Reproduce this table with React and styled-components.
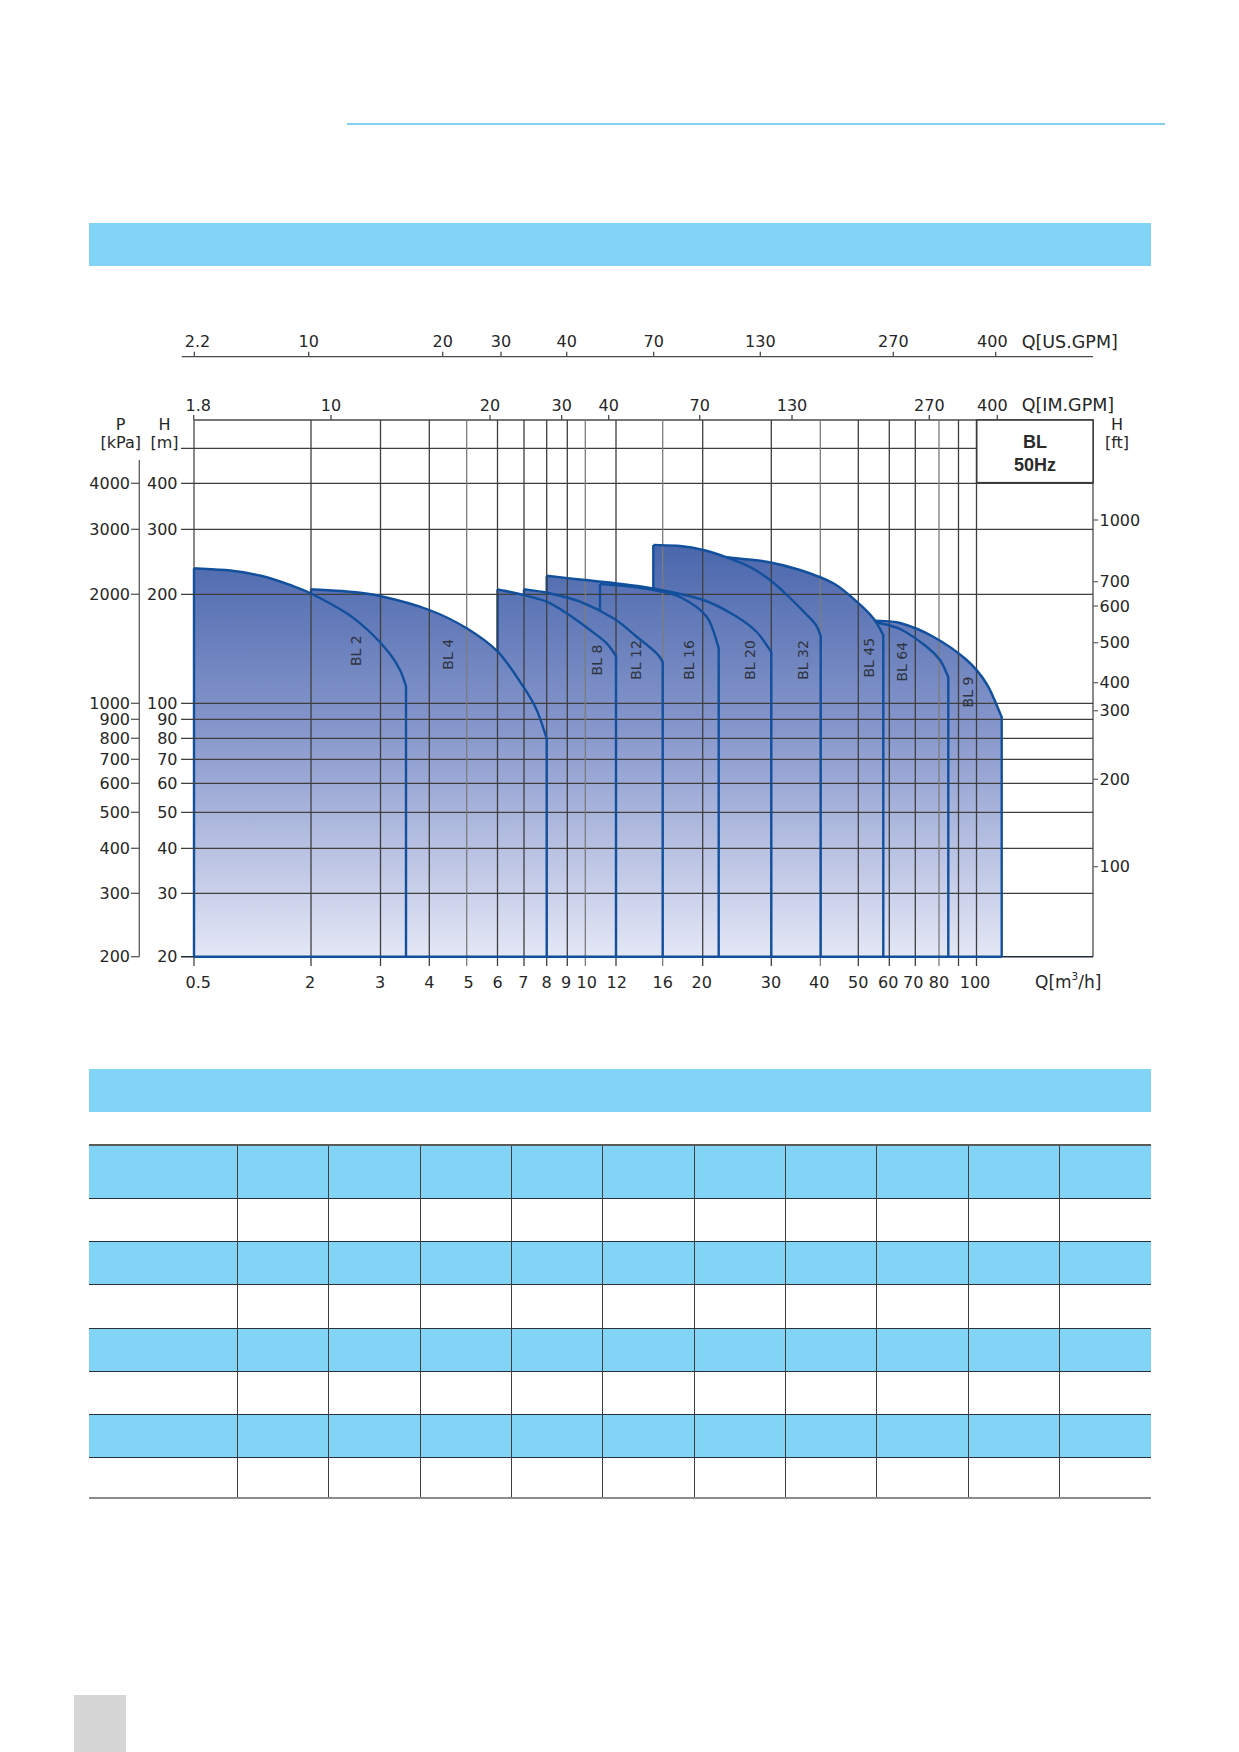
import React from 'react'
import styled, { createGlobalStyle } from 'styled-components'

const GlobalStyle = createGlobalStyle`
  html, body {
    margin: 0;
    padding: 0;
    background: #fff;
  }
  body {
    font-family: 'DejaVu Sans', 'Liberation Sans', sans-serif;
  }
`

const BAND_BLUE = '#82d4f6'
const CURVE_BLUE = '#124f9c'
const BOTTOM = 956.7
const LEFT = 194
const RIGHT = 1093
const TOP = 420

const Page = styled.div`
  width: 1239px;
  height: 1752px;
  overflow: hidden;
  background: #fff;
  display: flex;
  flex-direction: column;
`

const TopRule = styled.div`
  margin: 123px 0 0 347px;
  width: 818px;
  height: 2px;
  background: #86d1f1;
`

const SectionBand = styled.div`
  margin: ${p => p.$gap}px 0 0 89px;
  width: 1062px;
  height: 43px;
  background: ${BAND_BLUE};
`

const Chart = styled.svg`
  display: block;
  margin-top: 34px;
  flex: none;
`

const GridLine = styled.line`
  stroke: ${p => (p.$light ? '#7c7c7c' : '#3f3f3f')};
  stroke-width: 1.3;
`

const AxisLine = styled.line`
  stroke: ${p => p.$tone || '#4a4a4a'};
  stroke-width: ${p => p.$w || 1.3};
`

const AxisText = styled.text`
  font-family: 'DejaVu Sans', sans-serif;
  font-size: ${p => p.$size || 16}px;
  fill: #262626;
`

const CurveFill = styled.path`
  fill: url(#blGradient);
  stroke: none;
`

const CurveStroke = styled.path`
  fill: none;
  stroke: ${CURVE_BLUE};
  stroke-width: 2.4;
  stroke-linejoin: round;
`

const CurveLabel = styled.text`
  font-family: 'DejaVu Sans', sans-serif;
  font-size: 14px;
  fill: #2e3440;
`

const ModelBox = styled.rect`
  fill: #fff;
  stroke: #3a3a3a;
  stroke-width: 1.6;
`

const ModelText = styled.text`
  font-family: 'Liberation Sans', Arial, sans-serif;
  font-weight: 700;
  font-size: 18px;
  fill: #2b2b2b;
`

const Table = styled.table`
  margin: 32.3px 0 0 89px;
  width: 1062px;
  border-collapse: collapse;
  table-layout: fixed;
  border-top: 2px solid #5a5a5a;
  border-bottom: 2px solid #8c8c8c;
`

const Row = styled.tr`
  height: ${p => p.$h}px;
  background: ${p => (p.$blue ? BAND_BLUE : '#fff')};
`

const Cell = styled.td`
  padding: 0;
  border-top: 1.5px solid #2b2f36;
  border-left: ${p => (p.$first ? 'none' : '1.5px solid #3f3f3f')};
  ${p => p.$first && 'width: 148px;'}
`

const FooterTab = styled.div`
  margin: auto 0 0 74px;
  width: 52px;
  height: 57px;
  background: #d6d6d6;
`

// catmull-rom through the sampled points, as cubic segments
const smooth = pts => {
  let d = ''
  for (let i = 0; i < pts.length - 1; i++) {
    const p0 = pts[i - 1] || pts[i]
    const p1 = pts[i]
    const p2 = pts[i + 1]
    const p3 = pts[i + 2] || p2
    const c1 = [p1[0] + (p2[0] - p0[0]) / 6, p1[1] + (p2[1] - p0[1]) / 6]
    const c2 = [p2[0] - (p3[0] - p1[0]) / 6, p2[1] - (p3[1] - p1[1]) / 6]
    d += ` C${c1.map(n => n.toFixed(1))} ${c2.map(n => n.toFixed(1))} ${p2}`
  }
  return d
}

// drawn right to left so each curve's left edge hides under its neighbour
const curves = [
  {
    name: 'BL 9',
    label: [967.7, 692],
    pts: [[875, 620.7], [900, 623], [933.3, 636.7], [966.7, 660], [986.7, 684], [1001.7, 717]],
  },
  {
    name: 'BL 64',
    label: [902.3, 661.7],
    pts: [[876.7, 622.5], [900, 629], [926.7, 646.7], [940, 660], [948.3, 677]],
  },
  {
    name: 'BL 45',
    label: [869.3, 657.7],
    pts: [[726.7, 557.3], [766.7, 561.7], [800, 570], [833.3, 583.3], [856.7, 601.7], [873.3, 618.3], [883.3, 635]],
  },
  {
    name: 'BL 32',
    label: [803.3, 660],
    pts: [[653.3, 545], [680, 546], [703.3, 550], [726.7, 557.3], [750, 567], [770, 580], [788, 596], [805, 613], [816, 625], [820.7, 636]],
  },
  {
    name: 'BL 20',
    label: [750, 660],
    pts: [[546.7, 575.7], [580, 579.5], [613.3, 583], [653.3, 588.5], [703.3, 600], [736.7, 616.7], [756.7, 632], [771.3, 652]],
  },
  {
    name: 'BL 16',
    label: [689, 660],
    pts: [[600, 584], [630, 586.5], [653.3, 590], [680, 597], [706.7, 616.7], [718.7, 648]],
  },
  {
    name: 'BL 12',
    label: [636, 660],
    pts: [[524, 589.3], [546.7, 592.7], [580, 601.7], [613.3, 618.3], [636.7, 636.7], [656.7, 653.3], [662.7, 662]],
  },
  {
    name: 'BL 8',
    label: [596.7, 660],
    pts: [[497.5, 589.3], [523.3, 595], [546.7, 601.7], [566.7, 613.3], [590, 630], [606.7, 643.3], [616, 656]],
  },
  {
    name: 'BL 4',
    label: [447.7, 654.3],
    pts: [[311, 589.3], [346.7, 591.5], [380, 596], [429.3, 610], [466.7, 628.3], [497.7, 651.7], [523.3, 686.7], [536.7, 710], [546.7, 738.3]],
  },
  {
    name: 'BL 2',
    label: [355.7, 650.7],
    pts: [[LEFT, 568.3], [230, 570.5], [262, 576], [290, 585], [311, 593.5], [346.7, 613.3], [372, 634], [390, 654], [400, 670], [406, 686]],
  },
]

const headLines = [448.3, 483.3, 529.3, 594.3, 703.3, 719.3, 738.3, 759.3, 783.3, 812.3, 848.3, 893.3]

const flowLines = [
  { x: 311 }, { x: 380.5 }, { x: 429.3 }, { x: 466.7, light: true }, { x: 497.5 },
  { x: 524 }, { x: 546.7 }, { x: 567.3 }, { x: 585.3, light: true }, { x: 616 },
  { x: 662.7, light: true }, { x: 702.7 }, { x: 771.3 }, { x: 820.3, light: true },
  { x: 858.3 }, { x: 889.3 }, { x: 915.3 }, { x: 939, light: true }, { x: 958.5 }, { x: 976.5 },
]

const flowLabels = [
  ['0.5', 198.3], ['2', 310], ['3', 380], ['4', 429.3], ['5', 468.7], ['6', 497.7],
  ['7', 523.3], ['8', 546.7], ['9', 566], ['10', 586.7], ['12', 616.7], ['16', 662.7],
  ['20', 701.7], ['30', 771], ['40', 819.3], ['50', 858.3], ['60', 888.3], ['70', 913.3],
  ['80', 939], ['100', 975],
]

const pressureLabels = [
  ['4000', '400', 483.3], ['3000', '300', 529.3], ['2000', '200', 594.3],
  ['1000', '100', 703.3], ['900', '90', 719.3], ['800', '80', 738.3],
  ['700', '70', 759.3], ['600', '60', 783.3], ['500', '50', 812.3],
  ['400', '40', 848.3], ['300', '30', 893.3], ['200', '20', BOTTOM],
]

const feetLabels = [
  ['1000', 520], ['700', 581.7], ['600', 606], ['500', 642.7],
  ['400', 682.7], ['300', 710.7], ['200', 779.3], ['100', 866.7],
]

const usGpm = [
  ['2.2', 194.3, 197.5], ['10', 308.7], ['20', 442.7], ['30', 501], ['40', 566.7],
  ['70', 653.7], ['130', 760.3], ['270', 893.3], ['400', 995.7, 992.3],
]

const imGpm = [
  ['1.8', 193.7, 198.3], ['10', 331], ['20', 490], ['30', 561.7], ['40', 608.7],
  ['70', 699.7], ['130', 792], ['270', 929.3], ['400', 997.3, 992.3],
]

const TopScale = ({ ticks, y, title }) => (
  <g>
    {ticks.map(([text, tx, lx]) => (
      <g key={text}>
        <AxisLine x1={tx} x2={tx} y1={y - 5} y2={y} />
        <AxisText x={lx || tx} y={y - 15} textAnchor="middle" dominantBaseline="central">
          {text}
        </AxisText>
      </g>
    ))}
    <AxisText x={1021.7} y={y - 15} dominantBaseline="central" $size={17.5}>
      {title}
    </AxisText>
  </g>
)

const UnitStack = ({ x, top, bottom }) => (
  <g>
    <AxisText x={x} y={424} textAnchor="middle" dominantBaseline="central">{top}</AxisText>
    <AxisText x={x} y={442} textAnchor="middle" dominantBaseline="central">{bottom}</AxisText>
  </g>
)

const PerformanceChart = () => (
  <Chart width="1239" height="710" viewBox="0 300 1239 710">
    <defs>
      <linearGradient id="blGradient" gradientUnits="userSpaceOnUse" x1="0" y1="545" x2="0" y2={BOTTOM}>
        <stop offset="0" stopColor="#4a67ac" />
        <stop offset="0.45" stopColor="#8797cc" />
        <stop offset="1" stopColor="#e4e7f6" />
      </linearGradient>
    </defs>

    {/* US gallon scale */}
    <AxisLine x1={181.7} x2={RIGHT} y1={356.7} y2={356.7} />
    <TopScale ticks={usGpm} y={356.7} title="Q[US.GPM]" />

    {/* imperial gallon scale sits on the chart's top border */}
    <TopScale ticks={imGpm} y={TOP} title="Q[IM.GPM]" />

    {/* frame under the fills */}
    <AxisLine x1={LEFT} x2={LEFT} y1={TOP} y2={966} />
    <AxisLine x1={RIGHT} x2={RIGHT} y1={TOP} y2={BOTTOM} />
    <AxisLine x1={LEFT} x2={RIGHT} y1={TOP} y2={TOP} />

    {curves.map(({ name, pts }) => {
      const [x0, y0] = pts[0]
      const [x1] = pts[pts.length - 1]
      return (
        <g key={name}>
          <CurveFill d={`M${x0},${BOTTOM} L${x0},${y0}${smooth(pts)} L${x1},${BOTTOM} Z`} />
          <CurveStroke d={`M${x0},${BOTTOM} L${x0},${y0}`} />
        </g>
      )
    })}

    {headLines.map(y => (
      <GridLine key={y} x1={181} x2={RIGHT} y1={y} y2={y} />
    ))}
    {flowLines.map(({ x, light }) => (
      <GridLine key={x} x1={x} x2={x} y1={TOP} y2={966} $light={light} />
    ))}
    <AxisLine x1={181} x2={RIGHT} y1={BOTTOM} y2={BOTTOM} $tone="#1f2a3a" $w={1.6} />

    {curves.map(({ name, pts }) => {
      const [x0, y0] = pts[0]
      const [x1] = pts[pts.length - 1]
      return <CurveStroke key={name} d={`M${x0},${y0}${smooth(pts)} L${x1},${BOTTOM}`} />
    })}
    <CurveStroke d={`M${LEFT},${BOTTOM} L1001.7,${BOTTOM}`} />

    {curves.map(({ name, label: [lx, ly] }) => (
      <CurveLabel
        key={name}
        transform={`translate(${lx},${ly}) rotate(-90)`}
        textAnchor="middle"
        dominantBaseline="central"
      >
        {name}
      </CurveLabel>
    ))}

    {/* pressure and head scales on the left */}
    <AxisLine x1={139.3} x2={139.3} y1={460} y2={BOTTOM} $tone="#5a5a5a" />
    <UnitStack x={120.7} top="P" bottom="[kPa]" />
    <UnitStack x={164.5} top="H" bottom="[m]" />
    {pressureLabels.map(([kpa, m, y]) => (
      <g key={kpa}>
        <AxisLine x1={131} x2={139.3} y1={y} y2={y} $tone="#5a5a5a" />
        <AxisText x={130} y={y} textAnchor="end" dominantBaseline="central">{kpa}</AxisText>
        <AxisText x={177.5} y={y} textAnchor="end" dominantBaseline="central">{m}</AxisText>
      </g>
    ))}

    {/* feet scale on the right */}
    <UnitStack x={1117} top="H" bottom="[ft]" />
    {feetLabels.map(([text, y]) => (
      <g key={text}>
        <AxisLine x1={RIGHT} x2={1098} y1={y} y2={y} $tone="#6a6a6a" />
        <AxisText x={1099.5} y={y} dominantBaseline="central">{text}</AxisText>
      </g>
    ))}

    {flowLabels.map(([text, x]) => (
      <AxisText key={text} x={x} y={982} textAnchor="middle" dominantBaseline="central">
        {text}
      </AxisText>
    ))}
    <AxisText x={1035} y={982} dominantBaseline="central" $size={17}>
      Q[m<tspan fontSize="10.5" dy="-6">3</tspan><tspan dy="6">/h]</tspan>
    </AxisText>

    <ModelBox x={976.7} y={TOP} width={116.4} height={62.7} />
    <ModelText x={1035} y={442.3} textAnchor="middle" dominantBaseline="central">BL</ModelText>
    <ModelText x={1035} y={465} textAnchor="middle" dominantBaseline="central">50Hz</ModelText>
  </Chart>
)

const rowHeights = [53.3, 43.3, 43.3, 43.3, 43.3, 43.3, 43.3, 40.3]
const columns = Array.from({ length: 11 }, (_, i) => i)

const DataTable = () => (
  <Table>
    <tbody>
      {rowHeights.map((h, r) => (
        <Row key={r} $h={h} $blue={r % 2 === 0}>
          {columns.map(c => (
            <Cell key={c} $first={c === 0} />
          ))}
        </Row>
      ))}
    </tbody>
  </Table>
)

const App = () => (
  <Page>
    <GlobalStyle />
    <TopRule />
    <SectionBand $gap={98.3} />
    <PerformanceChart />
    <SectionBand $gap={58.3} />
    <DataTable />
    <FooterTab />
  </Page>
)

export default App
